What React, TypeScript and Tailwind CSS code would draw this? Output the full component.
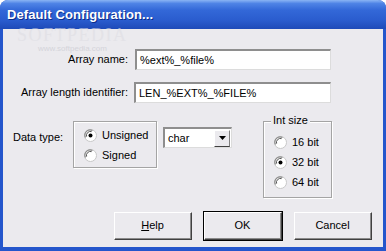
import React from 'react'

const font = { fontFamily: '"Liberation Sans", Arial, sans-serif' }

// classic win sunken edit box
const Sunken: React.FC<{ className?: string; children?: React.ReactNode }> = ({ className, children }) => (
    <div className={`border-t-2 border-l-2 border-t-[#8e8e8e] border-l-[#8e8e8e] border-b border-r border-b-[#dcdcdc] border-r-[#dcdcdc] bg-white ${className ?? ''}`}>
        {children}
    </div>
)

const Radio: React.FC<{ checked?: boolean; label: string }> = ({ checked, label }) => (
    <div className="flex items-center h-[20px]">
        <svg width="13" height="13" viewBox="0 0 13 13" className="mr-[5px] shrink-0">
            <circle cx="6.5" cy="6.5" r="6" fill="#ffffff" stroke="#c8c8c8" />
            <path d="M1.5 8.5 A5.2 5.2 0 0 1 8.5 1.5" fill="none" stroke="#8a8a8a" strokeWidth="1.2" />
            <path d="M2.6 7.6 A4 4 0 0 1 7.6 2.6" fill="none" stroke="#555" strokeWidth="1" />
            {checked && <circle cx="6.5" cy="6.5" r="2" fill="#000" />}
        </svg>
        <span className="text-[11px] text-black leading-none">{label}</span>
    </div>
)

const Button: React.FC<{ children: React.ReactNode; primary?: boolean }> = ({ children, primary }) => (
    <div className={`w-[80px] h-[30px] ${primary ? 'border border-black' : 'border border-transparent'}`}>
        <div className="w-full h-full border-t border-l border-t-white border-l-white border-b border-r border-b-[#404040] border-r-[#404040] bg-[#ebeaee]">
            <div className="w-full h-full border-b border-r border-b-[#8a8a8a] border-r-[#8a8a8a] flex items-center justify-center text-[11px] text-black">
                {children}
            </div>
        </div>
    </div>
)

export default function App() {
    return (
        <div style={font} className="w-[386px] h-[251px] bg-[#2456cc] rounded-t-[8px] overflow-hidden flex flex-col relative">
            {/* Title bar */}
            <div className="h-[29px] shrink-0 bg-[linear-gradient(to_bottom,#8ab4f4_0%,#4f84e6_12%,#3368d8_35%,#2a5cce_70%,#1e4ab8_100%)] flex items-center pl-[7px]">
                <span className="text-white font-bold text-[13px] tracking-[0.1px] [text-shadow:1px_1px_0_#0c2c8a]">
                    Default Configuration...
                </span>
            </div>

            {/* Client area */}
            <div className="flex-1 mx-[3px] mb-[4px] bg-[#ebeaee] flex flex-col">
                <div className="grid grid-cols-[125px_197px] gap-x-[6px] gap-y-[12px] mt-[20px] items-center">
                    <span className="text-[11px] text-black text-right">Array name:</span>
                    <Sunken className="h-[21px] flex items-center pl-[3px] ml-[1px] w-[196px]">
                        <span className="text-[11px] text-black">%ext%_%file%</span>
                    </Sunken>
                    <span className="text-[11px] text-black text-right">Array length identifier:</span>
                    <Sunken className="h-[21px] flex items-center pl-[3px]">
                        <span className="text-[11px] text-black">LEN_%EXT%_%FILE%</span>
                    </Sunken>
                </div>

                <div className="flex items-start mt-[14px]">
                    <span className="text-[11px] text-black ml-[10px] mt-[12px] w-[60px]">Data type:</span>

                    <div className="w-[84px] h-[47px] border border-[#a4a4a4] shadow-[inset_1px_1px_0_#fff,1px_1px_0_#fff] flex flex-col pl-[10px] pt-[3px] mt-[4px]">
                        <Radio checked label="Unsigned" />
                        <Radio label="Signed" />
                    </div>

                    <Sunken className="ml-[6px] mt-[10px] w-[69px] h-[21px] flex items-center justify-between">
                        <span className="text-[11px] text-black pl-[3px]">char</span>
                        <div className="w-[16px] h-[17px] mr-[1px] bg-[#ebeaee] border-t border-l border-t-white border-l-white border-b border-r border-b-[#404040] border-r-[#808080] flex items-center justify-center">
                            <svg width="7" height="4" viewBox="0 0 7 4">
                                <path d="M0 0 H7 L3.5 4 Z" fill="#000" />
                            </svg>
                        </div>
                    </Sunken>

                    <div className="ml-[31px] mt-[4px] w-[69px] h-[77px] border border-[#a4a4a4] shadow-[inset_1px_1px_0_#fff,1px_1px_0_#fff] relative flex flex-col pl-[10px] pt-[10px]">
                        <span className="absolute -top-[7px] left-[7px] px-[2px] bg-[#ebeaee] text-[11px] text-black leading-none">Int size</span>
                        <Radio label="16 bit" />
                        <Radio checked label="32 bit" />
                        <Radio label="64 bit" />
                    </div>
                </div>

                <div className="flex justify-end gap-[10px] mt-[13px] mr-[10px]">
                    <Button><span><u>H</u>elp</span></Button>
                    <Button primary>OK</Button>
                    <Button>Cancel</Button>
                </div>
            </div>

            {/* watermark */}
            <span className="absolute left-[17px] top-[26px] text-[18px] leading-[18px] tracking-[1.5px] text-[#dedee4] opacity-60 pointer-events-none" style={{ fontFamily: '"Liberation Serif", serif' }}>
                SOFTPEDIA
            </span>
            <span className="absolute left-[38px] top-[45px] text-[8px] leading-[8px] text-[#d4d4da] pointer-events-none">www.softpedia.com</span>
        </div>
    )
}
